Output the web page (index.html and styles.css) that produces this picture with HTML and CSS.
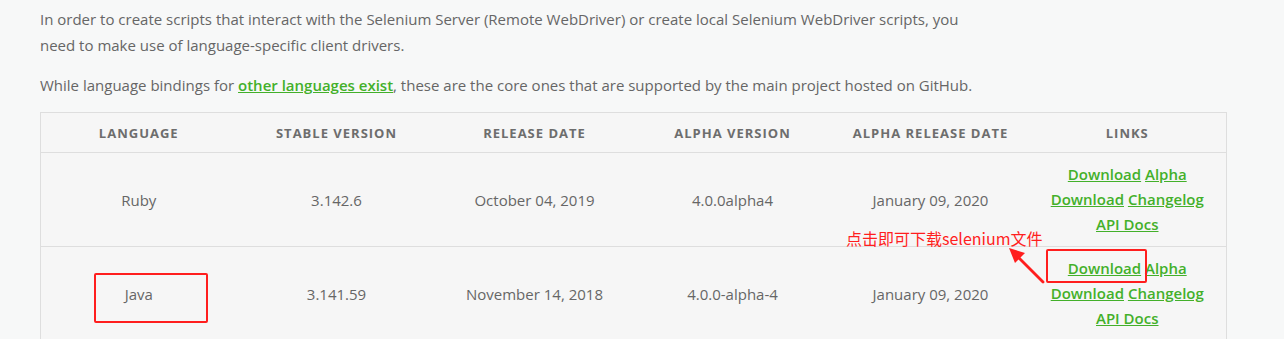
FILE: index.html
```html
<!DOCTYPE html>
<html>
<head>
<meta charset="utf-8">
<link rel="stylesheet" href="styles.css">
</head>
<body>
<div class="page">
  <p class="intro">In order to create scripts that interact with the Selenium Server (Remote WebDriver) or create local Selenium WebDriver scripts, you<br>need to make use of language-specific client drivers.</p>
  <p class="intro second">While language bindings for <a href="#">other languages exist</a>, these are the core ones that are supported by the main project hosted on GitHub.</p>
  <table class="drivers">
    <colgroup>
      <col class="c1"><col class="c2"><col class="c3"><col class="c4"><col class="c5"><col class="c6">
    </colgroup>
    <thead>
      <tr><th>Language</th><th>Stable Version</th><th>Release Date</th><th>Alpha Version</th><th>Alpha Release Date</th><th>Links</th></tr>
    </thead>
    <tbody>
      <tr>
        <td>Ruby</td><td>3.142.6</td><td>October 04, 2019</td><td>4.0.0alpha4</td><td>January 09, 2020</td>
        <td class="links"><a href="#">Download</a> <a href="#">Alpha</a><br><a href="#">Download</a> <a href="#">Changelog</a><br><a href="#">API Docs</a></td>
      </tr>
      <tr>
        <td>Java</td><td>3.141.59</td><td>November 14, 2018</td><td>4.0.0-alpha-4</td><td>January 09, 2020</td>
        <td class="links"><a href="#">Download</a> <a href="#">Alpha</a><br><a href="#">Download</a> <a href="#">Changelog</a><br><a href="#">API Docs</a></td>
      </tr>
    </tbody>
  </table>
  <div class="note">点击即可下载selenium文件</div>
  <div class="mark mark-java"></div>
  <div class="mark mark-download"></div>
  <svg class="arrow" width="50" height="50" viewBox="0 0 50 50">
    <line x1="41" y1="39" x2="14" y2="12" stroke="#ff1e1e" stroke-width="2.8" stroke-linecap="round"/>
    <polygon points="7,5 23,10 13,20" fill="#ff1e1e"/>
  </svg>
</div>
</body>
</html>
```
FILE: styles.css
```css
html, body {
  margin: 0;
  padding: 0;
  background: #f7f8f8;
}
.page {
  position: relative;
  padding: 6px 0 0 40px;
  font-family: "Open Sans", "Noto Sans CJK SC", sans-serif;
  font-size: 15px;
  color: #666;
}
.intro {
  margin: 0;
  line-height: 26px;
}
.intro.second {
  margin-top: 14px;
}
a {
  color: #43b02a;
  font-weight: 600;
  text-decoration: underline;
}
.drivers {
  margin-top: 14px;
  width: 1187px;
  border-collapse: collapse;
  table-layout: fixed;
  background: #f6f6f6;
  border: 1px solid #dedede;
}
.c1 { width: 196px; }
.c2 { width: 200px; }
.c3 { width: 196px; }
.c4 { width: 200px; }
.c5 { width: 196px; }
.c6 { width: 198px; }
.drivers th {
  height: 39px;
  padding: 0;
  font-size: 13px;
  line-height: 18px;
  font-weight: 700;
  letter-spacing: 1px;
  text-transform: uppercase;
  color: #6d6d6d;
  text-align: center;
  border-bottom: 1px solid #dedede;
}
.drivers td {
  height: 93px;
  padding: 0;
  text-align: center;
  vertical-align: middle;
  border-bottom: 1px solid #dedede;
}
.drivers td.links {
  line-height: 25px;
  font-size: 15px;
}
.note {
  position: absolute;
  left: 846px;
  top: 227px;
  font-size: 16px;
  color: #ff1e1e;
  line-height: 22px;
  font-family: "Microsoft YaHei", "Noto Sans CJK SC", sans-serif;
}
.mark {
  position: absolute;
  border: 2.5px solid #ff1e1e;
  border-radius: 2px;
  box-sizing: border-box;
}
.mark-java {
  left: 94px;
  top: 273px;
  width: 114px;
  height: 50px;
}
.mark-download {
  left: 1046px;
  top: 249px;
  width: 101px;
  height: 34px;
}
.arrow {
  position: absolute;
  left: 1002px;
  top: 243px;
}
```
